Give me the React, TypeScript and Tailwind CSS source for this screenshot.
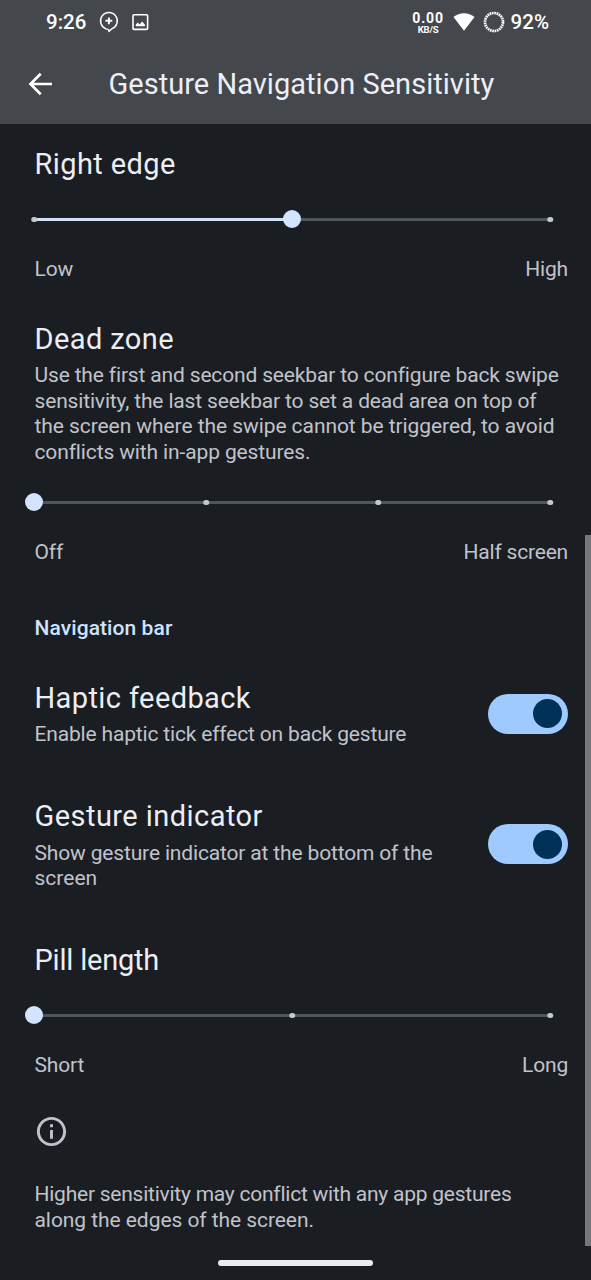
import { useState, type ReactNode } from "react";

function StatusBar() {
  return (
    <div className="flex h-[43px] items-center pl-[46px] pr-[42px] text-white">
      <span className="w-[52px] pt-[2px] text-[20.5px] font-medium leading-[41px]">9:26</span>
      <svg className="h-[22px] w-[22px]" viewBox="0 0 22 22" fill="none" stroke="currentColor" strokeWidth="1.4">
        <path d="M8 17.8A8.4 8.4 0 1 1 13.8 17.8L11 20.6L10.6 18.6L8 17.8Z" strokeLinejoin="round" />
        <path d="M10.9 6.4v6.8M7.5 9.8h6.8" strokeWidth="1.9" />
      </svg>
      <svg className="ml-[11px] h-[18px] w-[18px]" viewBox="0 0 18 18">
        <rect x="2" y="1.8" width="14.6" height="14.6" rx="1" fill="none" stroke="currentColor" strokeWidth="1.6" />
        <path d="M4.8 13.3V11.6L6.7 9.6L8.6 11.4L11 8.4L13.9 11.6V13.3Z" fill="currentColor" />
      </svg>
      <div className="ml-auto mr-[8px] flex w-[33px] flex-col items-center pt-[2px] font-bold">
        <span className="text-[14px] leading-[14px] tracking-[0.9px]">0.00</span>
        <span className="text-[9.5px] leading-[10px] tracking-[-0.2px]">KB/S</span>
      </div>
      <svg className="h-[18px] w-[22px]" viewBox="0 0 22 18" fill="currentColor">
        <path d="M11 17.8L0.5 4C3.4 1.7 7 0.3 11 0.3S18.6 1.7 21.5 4Z" />
      </svg>
      <svg className="ml-[8px] h-[22px] w-[22px]" viewBox="0 0 22 22" fill="none" stroke="currentColor">
        <circle cx="11" cy="11" r="9" strokeWidth="2.7" strokeDasharray="1.68 0.677" />
      </svg>
      <span className="ml-[6px] pt-[2px] text-[20.5px] font-medium leading-[41px]">92%</span>
    </div>
  );
}

function Title({ children, className = "" }: { children: ReactNode; className?: string }) {
  return (
    <h2 className={`whitespace-nowrap text-[29px] leading-[36px] text-[#eceef5] ${className}`}>{children}</h2>
  );
}

function Line({ children, className = "" }: { children: ReactNode; className?: string }) {
  return <span className={`block whitespace-nowrap ${className}`}>{children}</span>;
}

function Slider({ stops, initial, low, high }: { stops: number; initial: number; low: string; high: string }) {
  const [value, setValue] = useState(initial);
  const ticks = Array.from({ length: stops }, (_, i) => i);
  const pct = (value / (stops - 1)) * 100;
  return (
    <div>
      <div className="relative -ml-[0.5px] h-[30px] w-[516px]">
        <div className="absolute inset-x-0 top-[14px] h-[3px] bg-[#50555c]" />
        <div className="absolute left-0 top-[14px] h-[3px] bg-[#cfe0f7]" style={{ width: `${pct}%` }} />
        {ticks.map((i) => (
          <button
            key={i}
            onClick={() => setValue(i)}
            className="absolute top-[12.5px] h-[5.5px] w-[5.5px] -translate-x-1/2 rounded-full bg-[#c5c8d0]"
            style={{ left: `${(i / (stops - 1)) * 100}%` }}
          />
        ))}
        <div
          className="absolute top-[6px] h-[18px] w-[18px] -translate-x-1/2 rounded-full bg-[#d2e4ff]"
          style={{ left: `${pct}%` }}
        />
      </div>
      <div className="mt-[22px] flex h-[28px] items-center justify-between text-[21px] text-[#c0c3cb]">
        <span className="tracking-[-0.15px]">{low}</span>
        <span className="mr-px tracking-[-0.2px]">{high}</span>
      </div>
    </div>
  );
}

function Toggle() {
  const [on, setOn] = useState(true);
  return (
    <button
      onClick={() => setOn(!on)}
      className={`flex h-[40px] w-[80px] shrink-0 items-center rounded-full px-[6px] ${on ? "justify-end bg-[#9ecaff]" : "justify-start bg-[#50555c]"}`}
    >
      <span className="h-[29px] w-[29px] rounded-full bg-[#003258]" />
    </button>
  );
}

export default function App() {
  return (
    <div className="relative h-[1280px] w-[591px] overflow-hidden bg-[#1a1d22] font-['Roboto',sans-serif]">
      <header className="h-[124px] bg-[#44474b]">
        <StatusBar />
        <div className="flex h-[82px] items-center pl-[28px]">
          <svg className="h-[24px] w-[24px] text-white" viewBox="0 0 24 24" fill="none" stroke="currentColor" strokeWidth="2.7">
            <path d="M24 12H3M12.7 1.7L2.5 12L12.7 22.3" />
          </svg>
          <h1 className="ml-[56.5px] whitespace-nowrap text-[29px] leading-[36px] tracking-[0.03px] text-[#eceef8]">
            Gesture Navigation Sensitivity
          </h1>
        </div>
      </header>

      <main className="pl-[34.5px] pr-[22px] text-[21px] leading-[25.7px] text-[#c0c3cb]">
        <section className="pt-[22px]">
          <Title className="tracking-[0.4px]">Right edge</Title>
          <div className="mt-[22px]">
            <Slider stops={3} initial={1} low="Low" high="High" />
          </div>
        </section>

        <section className="mt-[37px]">
          <Title className="tracking-[0.4px]">Dead zone</Title>
          <p className="mt-[6px]">
            <Line className="tracking-[-0.16px]">Use the first and second seekbar to configure back swipe</Line>
            <Line className="tracking-[-0.16px]">sensitivity, the last seekbar to set a dead area on top of</Line>
            <Line className="tracking-[-0.07px]">the screen where the swipe cannot be triggered, to avoid</Line>
            <Line className="tracking-[-0.13px]">conflicts with in-app gestures.</Line>
          </p>
          <div className="mt-[21.2px]">
            <Slider stops={4} initial={0} low="Off" high="Half screen" />
          </div>
        </section>

        <h3 className="mt-[48px] h-[26px] font-medium leading-[26px] tracking-[0.08px] text-[#cfe3ff]">Navigation bar</h3>

        <section className="mt-[39px] flex h-[68px] justify-between">
          <div>
            <Title className="tracking-[0.4px]">Haptic feedback</Title>
            <p className="mt-[6px]">
              <Line className="tracking-[-0.17px]">Enable haptic tick effect on back gesture</Line>
            </p>
          </div>
          <div className="mt-[13.5px] pr-px">
            <Toggle />
          </div>
        </section>

        <section className="mt-[50px] flex h-[94px] justify-between">
          <div>
            <Title className="tracking-[0.45px]">Gesture indicator</Title>
            <p className="mt-[6.5px]">
              <Line className="tracking-[-0.16px]">Show gesture indicator at the bottom of the</Line>
              <Line>screen</Line>
            </p>
          </div>
          <div className="mt-[26px] pr-px">
            <Toggle />
          </div>
        </section>

        <section className="mt-[50px]">
          <Title className="tracking-[-0.2px]">Pill length</Title>
          <div className="mt-[22px]">
            <Slider stops={3} initial={0} low="Short" high="Long" />
          </div>
        </section>

        <section className="mt-[34px]">
          <svg className="-ml-[0.5px] h-[35px] w-[35px]" viewBox="0 0 24 24" fill="currentColor">
            <path d="M11 7h2v2h-2zm0 4h2v6h-2zm1-9C6.48 2 2 6.48 2 12s4.48 10 10 10 10-4.48 10-10S17.52 2 12 2zm0 18c-4.41 0-8-3.59-8-8s3.59-8 8-8 8 3.59 8 8-3.59 8-8 8z" />
          </svg>
          <p className="mt-[31.7px] leading-[26px]">
            <Line className="tracking-[-0.24px]">Higher sensitivity may conflict with any app gestures</Line>
            <Line className="tracking-[-0.06px]">along the edges of the screen.</Line>
          </p>
        </section>
      </main>

      <div className="absolute right-0 top-[535px] h-[711px] w-[6px] bg-[#75777a]" />
      <div className="absolute left-[218px] top-[1260px] h-[6px] w-[155px] rounded-full bg-[#e8eced]" />
    </div>
  );
}
